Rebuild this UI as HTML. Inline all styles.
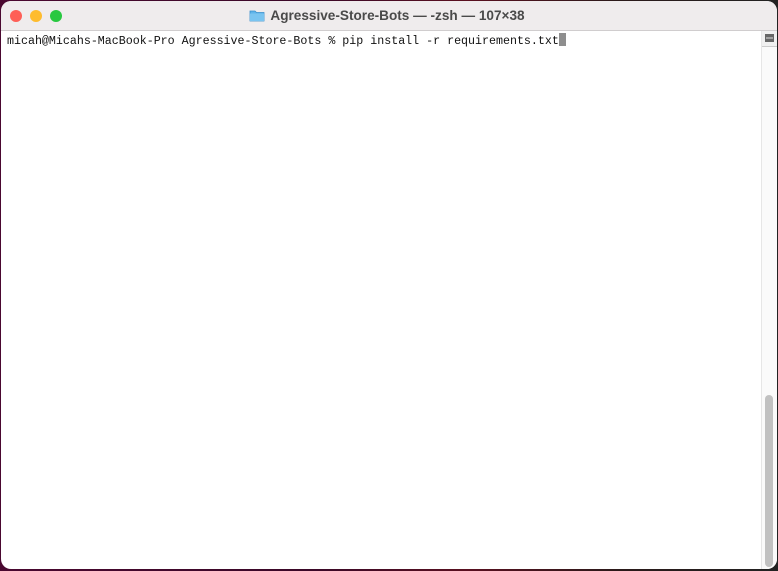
<!DOCTYPE html>
<html><head><style>
html,body{margin:0;padding:0;width:778px;height:571px;overflow:hidden;background:#3a0a2a;}
body{background:linear-gradient(90deg,#4a0830 0%,#3a0828 40%,#5a1020 60%,#2a1a1a 80%,#222 100%);position:relative}
.win{position:absolute;left:1px;top:1px;width:776px;height:568px;border-radius:10px;overflow:hidden;background:#fff;}
.tb{position:absolute;left:0;top:0;width:100%;height:29px;background:#efeced;border-bottom:1px solid #d0cdce;}
.dot{position:absolute;top:9px;width:12px;height:12px;border-radius:50%}
.title{position:absolute;left:0;right:0;top:7px;text-align:center;font:bold 13.6px "Liberation Sans",sans-serif;color:#4a4a4a;padding-right:4px}
.txt{position:absolute;left:6px;top:32px;font:11.65px "Liberation Mono",monospace;color:#111;white-space:pre;line-height:14px}
.cur{display:inline-block;width:7px;height:13px;background:#8e8e8e;vertical-align:-2px}
.sb{position:absolute;left:760px;top:30px;width:16px;height:538px;background:#fafafa;border-left:1px solid #e6e6e6}
.th{position:absolute;left:3px;top:364px;width:8px;height:172px;border-radius:4px;background:#c1c1c1}
.btn{position:absolute;left:0;top:0;width:15px;height:15px;border-bottom:1px solid #ccc;background:#f0f0f0}
</style></head><body>
<div class="win">
<div class="tb">
<div class="dot" style="left:9px;background:#fe5f57"></div>
<div class="dot" style="left:29px;background:#febc2e"></div>
<div class="dot" style="left:49px;background:#28c840"></div>
<div class="title"><svg width="16" height="13" viewBox="0 0 16 13" style="vertical-align:-2px;margin-right:5px"><path d="M1 2h5l1.5 1.5H15V12H1z" fill="#5fb4ea" stroke="#3a8fcc" stroke-width="0.8"/><rect x="1" y="4.5" width="14" height="7.5" fill="#7ac4f0"/></svg>Agressive-Store-Bots — -zsh — 107×38</div>
</div>
<div class="txt">micah@Micahs-MacBook-Pro Agressive-Store-Bots % pip install -r requirements.txt<span class="cur"></span></div>
<div class="sb"><div class="btn"><svg width="15" height="15" viewBox="0 0 15 15"><rect x="3" y="3" width="9" height="8" fill="#666"/><rect x="4" y="6.5" width="7" height="1" fill="#ddd"/></svg></div><div class="th"></div></div>
</div>
</body></html>
